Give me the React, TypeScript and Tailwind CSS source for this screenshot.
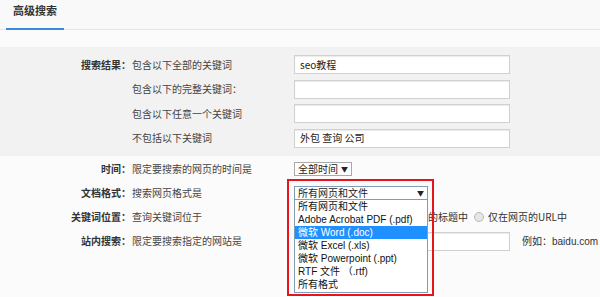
import React from "react";

const font = "font-['Noto_Sans_CJK_SC',sans-serif]";
const latin = "font-['Liberation_Sans','Noto_Sans_CJK_SC',sans-serif]";

const Row = ({ label, desc, children, h }: { label?: string; desc: string; children?: React.ReactNode; h: string }) => (
  <div className={`flex items-center ${h}`}>
    <div className="w-[132px] text-right font-bold text-[#333] pr-[1px]">{label ? `${label}：` : ""}</div>
    <div className="w-[162px] text-[#444]">{desc}</div>
    {children}
  </div>
);

const TextBox = ({ value }: { value?: string }) => (
  <div className="w-[216px] h-[19px] bg-white border border-[#d0d0d0] shadow-[inset_0_1px_1px_rgba(0,0,0,0.08)] flex items-center pl-[5px] text-[#222]">
    {value}
  </div>
);

const Radio = ({ text }: { text: string }) => (
  <div className="flex items-center gap-[4px]">
    <span className="w-[10px] h-[10px] rounded-full border border-[#b8b8b8] bg-[#e6e6e6]" />
    <span className="text-[#333]">{text}</span>
  </div>
);

const options = [
  "所有网页和文件",
  "Adobe Acrobat PDF (.pdf)",
  "微软 Word (.doc)",
  "微软 Excel (.xls)",
  "微软 Powerpoint (.ppt)",
  "RTF 文件 （.rtf)",
  "所有格式",
];

export default function App() {
  return (
    <div className={`relative w-[600px] h-[297px] overflow-hidden bg-[#fbfbfb] text-[10px] leading-none ${font}`}>
      <div className="h-[30px] bg-[#f9f9f9] border-b border-[#e6e6e6] flex">
        <div className="ml-[6px] w-[58px] h-[30px] border-b-2 border-[#3c8ae0] flex justify-center pt-[5px] text-[11px] font-bold text-[#333]">
          高级搜索
        </div>
      </div>
      <div className="h-[17px]" />
      <div className="bg-[#f2f2f2] h-[109px] pt-[8px] flex flex-col gap-[5.5px]">
        <Row label="搜索结果" desc="包含以下全部的关键词" h="h-[19px]">
          <TextBox value="seo教程" />
        </Row>
        <Row desc="包含以下的完整关键词：" h="h-[19px]">
          <TextBox />
        </Row>
        <Row desc="包含以下任意一个关键词" h="h-[19px]">
          <TextBox />
        </Row>
        <Row desc="不包括以下关键词" h="h-[19px]">
          <TextBox value="外包 查询 公司" />
        </Row>
      </div>
      <div className="pt-[1px] flex flex-col">
        <Row label="时间" desc="限定要搜索的网页的时间是" h="h-[24px]">
          <div className="w-[58px] h-[14px] bg-white border border-[#a9a9a9] flex items-center justify-between px-[3px] text-[#222]">
            <span>全部时间</span>
            <span className="text-[7px]">▼</span>
          </div>
        </Row>
        <Row label="文档格式" desc="搜索网页格式是" h="h-[24px]">
          <div className="w-[134px] h-[14px] bg-white border border-[#7f9db9] flex items-center justify-between px-[3px] text-[#222]">
            <span>所有网页和文件</span>
            <span className="text-[7px]">▼</span>
          </div>
        </Row>
        <Row label="关键词位置" desc="查询关键词位于" h="h-[24px]">
          <div className="flex items-center gap-[6px]">
            <Radio text="网页的任何地方" />
            <Radio text="仅网页的标题中" />
            <Radio text="仅在网页的URL中" />
          </div>
        </Row>
        <Row label="站内搜索" desc="限定要搜索指定的网站是" h="h-[24px]">
          <TextBox />
          <span className="ml-[12px] text-[#333]">
            例如：<span className={latin}>baidu.com</span>
          </span>
        </Row>
      </div>

      <div className={`absolute left-[294px] top-[199px] w-[134px] h-[94px] bg-white border border-[#7f9db9] ${latin} text-[#111]`}>
        {options.map((o, i) => (
          <div key={o} className={`h-[13px] flex items-center pl-[3px] ${i === 2 ? "bg-[#1e90ff] text-white" : ""}`}>
            {o}
          </div>
        ))}
      </div>
      <div className="absolute left-[287px] top-[179px] w-[147px] h-[117px] border-2 border-[#e8141c]" />
    </div>
  );
}
